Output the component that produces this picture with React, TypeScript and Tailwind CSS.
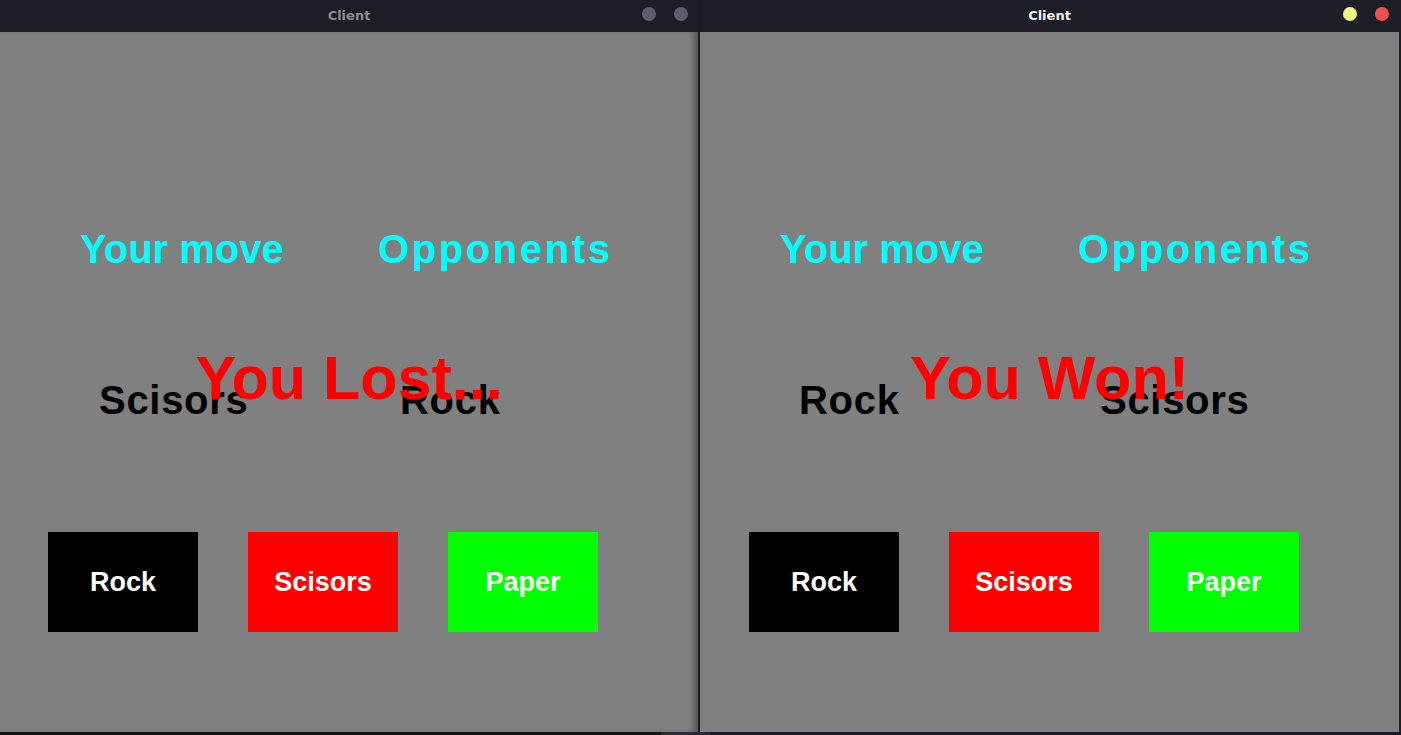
import React from 'react'

type Move = 'Rock' | 'Scisors' | 'Paper'

type WindowProps = {
  active: boolean
  mine: Move
  theirs: Move
  result: string
  className?: string
}

const font = "font-['Liberation_Sans',Arial,sans-serif]"

const buttons = [
  { label: 'Rock', bg: 'bg-black' },
  { label: 'Scisors', bg: 'bg-[#ff0000]' },
  { label: 'Paper', bg: 'bg-[#00ff00]' },
]

function TitleBar({ active }: { active: boolean }) {
  return (
    <div className="relative flex h-8 shrink-0 items-center justify-center bg-[#1e1e28]">
      <span
        className={
          "font-['DejaVu_Sans',sans-serif] text-[13px] font-bold " +
          (active ? 'text-[#f2f2f2]' : 'text-[#8a8c94]')
        }
      >
        Client
      </span>
      <div className="absolute right-[10px] top-[7px] flex gap-[18px]">
        <span
          className={
            'h-[14px] w-[14px] rounded-full ' +
            (active ? 'bg-[#f1f586]' : 'bg-[#5e5f6b]')
          }
        />
        <span
          className={
            'h-[14px] w-[14px] rounded-full ' +
            (active ? 'bg-[#f34f4f]' : 'bg-[#5e5f6b]')
          }
        />
      </div>
    </div>
  )
}

function GameWindow({ active, mine, theirs, result, className }: WindowProps) {
  return (
    <div className={'flex flex-col ' + className}>
      <TitleBar active={active} />
      <div
        className={
          'flex flex-1 flex-col bg-[#808080] ' +
          font +
          (active ? '' : ' shadow-[inset_-7px_0_6px_-3px_rgba(0,0,0,0.35)]')
        }
      >
        <div className="flex pt-[197px] text-[40px] font-bold leading-none text-[#00ffff]">
          <span className="ml-[80px] w-[298px]">Your move</span>
          <span className="tracking-[2.6px]">Opponents</span>
        </div>

        <div className="mt-[79px] grid">
          <div className="col-start-1 row-start-1 mt-[32px] flex text-[40px] font-bold leading-none tracking-[0.7px] text-black">
            <span className="ml-[99px] w-[301px]">{mine}</span>
            <span>{theirs}</span>
          </div>
          <div className="col-start-1 row-start-1 text-center text-[61px] font-bold leading-none text-[#ff0000]">
            {result}
          </div>
        </div>

        <div
          className={
            'mt-[112px] flex gap-[50px] ' + (active ? 'ml-[49px]' : 'ml-[48px]')
          }
        >
          {buttons.map((b) => (
            <div
              key={b.label}
              className={
                'flex h-[100px] w-[150px] items-center justify-center text-[27px] font-bold text-white ' +
                b.bg
              }
            >
              {b.label}
            </div>
          ))}
        </div>
      </div>
    </div>
  )
}

export default function App() {
  return (
    <div className="flex h-[735px] w-[1401px] flex-col overflow-hidden bg-[#16161c]">
      <div className="flex h-[732px]">
        <GameWindow
          active={false}
          mine="Scisors"
          theirs="Rock"
          result="You Lost..."
          className="w-[698px]"
        />
        <div className="w-[2px] bg-[#1b1b22]" />
        <GameWindow
          active
          mine="Rock"
          theirs="Scisors"
          result="You Won!"
          className="w-[699px]"
        />
        <div className="w-[2px] bg-[#1e1e28]" />
      </div>
      <div className="flex flex-1">
        <div className="w-[661px] bg-[#141414]" />
        <div className="w-[49px] bg-[#2a2a33]" />
        <div className="flex-1 bg-[#1c1c26]" />
      </div>
    </div>
  )
}
